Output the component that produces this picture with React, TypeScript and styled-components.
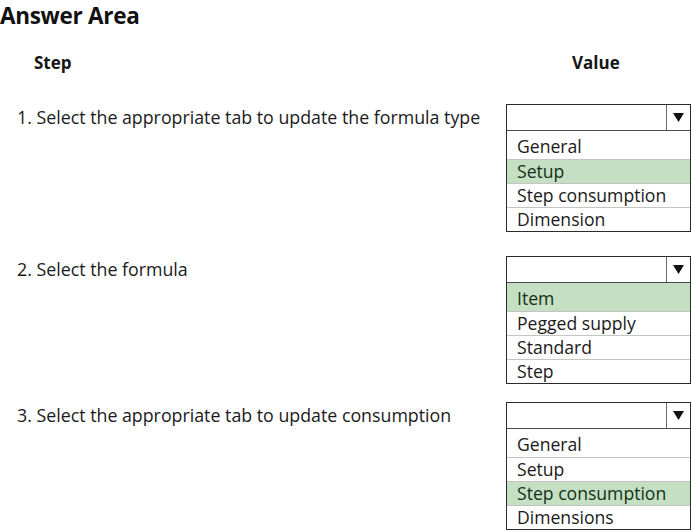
import React from "react";
import styled, { createGlobalStyle } from "styled-components";

const Global = createGlobalStyle`
  html, body { margin: 0; padding: 0; background: #ffffff; }
  body { font-family: "Open Sans", "Noto Sans", sans-serif; color: #161616; }
`;

const Page = styled.div`
  width: 693px;
  height: 532px;
  overflow: hidden;
  box-sizing: border-box;
  padding-top: 2px;
`;

const Title = styled.h1`
  margin: 0;
  font-size: 22.5px;
  font-weight: 700;
  line-height: 28px;
  letter-spacing: -0.3px;
  color: #111;
`;

const Row = styled.div<{ $gap: number }>`
  display: grid;
  grid-template-columns: 506px 185px;
  margin-top: ${(p) => p.$gap}px;
`;

const Header = styled.div<{ $indent: number }>`
  padding-left: ${(p) => p.$indent}px;
  font-size: 17px;
  font-weight: 700;
  line-height: 24px;
`;

const StepText = styled.div`
  padding-left: 17px;
  font-size: 17.8px;
  line-height: 27px;
  color: #1a1a1a;
  white-space: nowrap;
`;

const Box = styled.div`
  border: 1px solid #2b2b2b;
  width: 185px;
  box-sizing: border-box;
  background: #fff;
`;

const Select = styled.div`
  display: flex;
  height: 25px;
  border-bottom: 1px solid #4a4a4a;
`;

const SelectValue = styled.div`
  flex: 1;
`;

const ArrowCell = styled.div`
  width: 23px;
  border-left: 1px solid #6a6a6a;
  display: flex;
  align-items: center;
  justify-content: center;
`;

const Option = styled.div<{ $on?: boolean; $first?: boolean }>`
  height: ${(p) => (p.$first ? 28 : 24)}px;
  box-sizing: border-box;
  padding: ${(p) => (p.$first ? "4px" : "0px")} 0 0 10px;
  font-size: 17.6px;
  line-height: 23px;
  background: ${(p) => (p.$on ? "#c4dfc1" : "#fff")};
  color: ${(p) => (p.$on ? "#15301a" : "#1a1a1a")};
  & + & {
    border-top: 1px solid #c4c4c4;
  }
`;

const Arrow = () => (
  <svg width="11" height="9" viewBox="0 0 11 9">
    <polygon points="0,0 11,0 5.5,9" fill="#111" />
  </svg>
);

type Step = { text: string; options: string[]; selected: number; gap: number };

const steps: Step[] = [
  {
    text: "1. Select the appropriate tab to update the formula type",
    options: ["General", "Setup", "Step consumption", "Dimension"],
    selected: 1,
    gap: 29,
  },
  {
    text: "2. Select the formula",
    options: ["Item", "Pegged supply", "Standard", "Step"],
    selected: 0,
    gap: 24,
  },
  {
    text: "3. Select the appropriate tab to update consumption",
    options: ["General", "Setup", "Step consumption", "Dimensions"],
    selected: 2,
    gap: 18,
  },
];

export default function App() {
  return (
    <Page>
      <Global />
      <Title>Answer Area</Title>
      <Row $gap={21}>
        <Header $indent={34}>Step</Header>
        <Header $indent={66}>Value</Header>
      </Row>
      {steps.map((s) => (
        <Row key={s.text} $gap={s.gap}>
          <StepText>{s.text}</StepText>
          <Box>
            <Select>
              <SelectValue />
              <ArrowCell>
                <Arrow />
              </ArrowCell>
            </Select>
            {s.options.map((o, i) => (
              <Option key={o} $first={i === 0} $on={i === s.selected}>
                {o}
              </Option>
            ))}
          </Box>
        </Row>
      ))}
    </Page>
  );
}
